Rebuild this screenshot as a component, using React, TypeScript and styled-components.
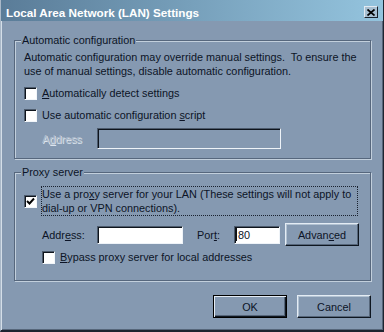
import React from "react";
import styled, { createGlobalStyle, css } from "styled-components";

const BG = "#8599b1";
const TEXT = "#0c1426";
const FONT = `"Liberation Sans", Arial, sans-serif`;

const GlobalStyle = createGlobalStyle`
  html, body { margin: 0; padding: 0; background: ${BG}; }
  * { box-sizing: border-box; }
`;

const Window = styled.div`
  width: 384px;
  height: 332px;
  display: flex;
  flex-direction: column;
  background: ${BG};
  border-left: 1px solid #a9b8c8;
  border-right: 1px solid #1c2430;
  border-bottom: 2px solid #1c2430;
  box-shadow: inset 1px 0 #d4dee8, inset -1px -1px #56667a;
  font: 10.85px ${FONT};
  color: ${TEXT};
`;

const TitleBar = styled.div`
  flex: none;
  height: 21px;
  padding: 3px 5px 0 5px;
  display: flex;
  align-items: center;
  justify-content: space-between;
  background: linear-gradient(to right, #5a7c98, #94c4de);
  color: #fff;
  font: bold 11.7px ${FONT};
`;

const CloseButton = styled.div`
  width: 14px;
  height: 12px;
  display: flex;
  align-items: center;
  justify-content: center;
  background: #a7bfd1;
  border: 1px solid;
  border-color: #e2eaf2 #1a222c #1a222c #e2eaf2;
`;

const Body = styled.div`
  flex: 1;
  display: flex;
  flex-direction: column;
  padding: 19px 12px 0 13px;
`;

const GroupBox = styled.div<{ $h: number; $pt: number; $mt?: number }>`
  position: relative;
  height: ${(p) => p.$h}px;
  margin-top: ${(p) => p.$mt ?? 0}px;
  padding: ${(p) => p.$pt}px 0 0 9px;
  display: flex;
  flex-direction: column;
  border: 1px solid #56677d;
  box-shadow: inset 1px 1px #c2cfdc, 1px 1px #c2cfdc;
`;

const GroupLabel = styled.span`
  position: absolute;
  top: -8px;
  left: 6px;
  padding: 0 1px;
  line-height: 14px;
  background: ${BG};
`;

const Desc = styled.div`
  line-height: 14px;
  white-space: pre;
`;

const Row = styled.div<{ $mt?: number; $indent?: number; $h?: number }>`
  display: flex;
  align-items: center;
  margin-top: ${(p) => p.$mt ?? 0}px;
  padding-left: ${(p) => p.$indent ?? 0}px;
  height: ${(p) => (p.$h ? `${p.$h}px` : "auto")};
`;

const CheckBox = styled.span`
  flex: none;
  width: 13px;
  height: 13px;
  margin-right: 5px;
  display: flex;
  align-items: center;
  justify-content: center;
  background: #fff;
  border: 1px solid;
  border-color: #4c5a6c #f2f6fa #f2f6fa #4c5a6c;
  box-shadow: inset 1px 1px #0e141c;
`;

const Label = styled.span<{ $w?: number; $ml?: number }>`
  flex: none;
  line-height: 14px;
  width: ${(p) => (p.$w ? `${p.$w}px` : "auto")};
  margin-left: ${(p) => p.$ml ?? 0}px;
  white-space: pre;
`;

const DisabledLabel = styled(Label)`
  color: #adbaca;
  text-shadow: 1px 1px #dde5ee;
`;

const FocusLabel = styled.span`
  width: 317px;
  margin-left: -1px;
  border: 1px dotted #1a2230;
  line-height: 14px;
  white-space: pre;
`;

const Key = styled.u`
  text-decoration: underline;
  text-underline-offset: 1px;
`;

const TextBox = styled.div<{ $w: number; $h: number; $disabled?: boolean }>`
  flex: none;
  width: ${(p) => p.$w}px;
  height: ${(p) => p.$h}px;
  display: flex;
  align-items: center;
  padding-left: 1px;
  background: ${(p) => (p.$disabled ? BG : "#fff")};
  border: 1px solid;
  border-color: #4c5a6c #eef3f8 #eef3f8 #4c5a6c;
  box-shadow: inset 1px 1px #0e141c;
  line-height: 14px;
`;

const Caret = styled.span`
  width: 1px;
  height: 13px;
  margin-right: 1px;
  background: #101010;
`;

const Button = styled.button<{ $default?: boolean; $ml?: number }>`
  flex: none;
  width: 74px;
  height: 23px;
  margin: 0 0 0 ${(p) => p.$ml ?? 0}px;
  padding: 0;
  background: ${BG};
  color: ${TEXT};
  font: 10.85px ${FONT};
  border: 1px solid;
  border-color: #e4ecf4 #0e1620 #0e1620 #e4ecf4;
  box-shadow: inset -1px -1px #56667a, inset 1px 1px #b2c2d2;
  ${(p) =>
    p.$default &&
    css`
      border-color: #000;
      box-shadow: inset 1px 1px #e4ecf4, inset -1px -1px #0e1620,
        inset -2px -2px #56667a;
    `}
`;

const Footer = styled.div`
  display: flex;
  justify-content: flex-end;
  margin-top: 14px;
  gap: 10px;
`;

const Check = () => (
  <svg width="9" height="9" viewBox="0 0 9 9">
    <polyline points="1,4 3.5,6.5 8,1.5" fill="none" stroke="#000" strokeWidth="1.9" />
  </svg>
);

const CloseX = () => (
  <svg width="8" height="7" viewBox="0 0 8 7">
    <path d="M0.5 0.5 L7.5 6.5 M7.5 0.5 L0.5 6.5" stroke="#000" strokeWidth="1.7" />
  </svg>
);

export default function App() {
  return (
    <>
      <GlobalStyle />
      <Window>
        <TitleBar>
          <span>Local Area Network (LAN) Settings</span>
          <CloseButton>
            <CloseX />
          </CloseButton>
        </TitleBar>
        <Body>
          <GroupBox $h={119} $pt={9}>
            <GroupLabel>Automatic configuration</GroupLabel>
            <Desc>
              {"Automatic configuration may override manual settings.  To ensure the\nuse of manual settings, disable automatic configuration."}
            </Desc>
            <Row $mt={8} $h={14}>
              <CheckBox />
              <Label>
                <Key>A</Key>utomatically detect settings
              </Label>
            </Row>
            <Row $mt={8} $h={14}>
              <CheckBox />
              <Label>
                Use automatic configuration <Key>s</Key>cript
              </Label>
            </Row>
            <Row $mt={6} $indent={18}>
              <DisabledLabel $w={55}>
                A<Key>d</Key>dress
              </DisabledLabel>
              <TextBox $w={184} $h={21} $disabled />
            </Row>
          </GroupBox>

          <GroupBox $h={109} $pt={13} $mt={13}>
            <GroupLabel>Proxy server</GroupLabel>
            <Row>
              <CheckBox>
                <Check />
              </CheckBox>
              <FocusLabel>
                Use a pro<Key>x</Key>y server for your LAN (These settings will not apply to{"\n"}dial-up or VPN connections).
              </FocusLabel>
            </Row>
            <Row $mt={7} $indent={18} $h={23}>
              <Label $w={55}>
                Addr<Key>e</Key>ss:
              </Label>
              <TextBox $w={86} $h={18} />
              <Label $w={37} $ml={14}>
                Por<Key>t</Key>:
              </Label>
              <TextBox $w={46} $h={18}>
                <Caret />
                80
              </TextBox>
              <Button $ml={5}>
                Advan<Key>c</Key>ed
              </Button>
            </Row>
            <Row $mt={4} $indent={18} $h={14}>
              <CheckBox />
              <Label>
                <Key>B</Key>ypass proxy server for local addresses
              </Label>
            </Row>
          </GroupBox>

          <Footer>
            <Button $default>OK</Button>
            <Button>Cancel</Button>
          </Footer>
        </Body>
      </Window>
    </>
  );
}
